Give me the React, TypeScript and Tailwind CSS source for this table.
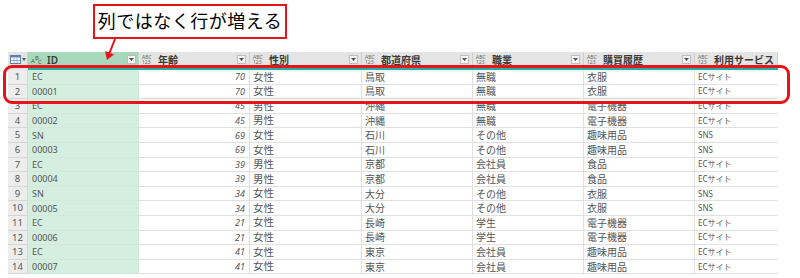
import React from "react";

type Row = [string, number, string, string, string, string, string];

const rows: Row[] = [
  ["EC", 70, "女性", "鳥取", "無職", "衣服", "ECサイト"],
  ["00001", 70, "女性", "鳥取", "無職", "衣服", "ECサイト"],
  ["EC", 45, "男性", "沖縄", "無職", "電子機器", "ECサイト"],
  ["00002", 45, "男性", "沖縄", "無職", "電子機器", "ECサイト"],
  ["SN", 69, "女性", "石川", "その他", "趣味用品", "SNS"],
  ["00003", 69, "女性", "石川", "その他", "趣味用品", "SNS"],
  ["EC", 39, "男性", "京都", "会社員", "食品", "ECサイト"],
  ["00004", 39, "男性", "京都", "会社員", "食品", "ECサイト"],
  ["SN", 34, "女性", "大分", "その他", "衣服", "SNS"],
  ["00005", 34, "女性", "大分", "その他", "衣服", "SNS"],
  ["EC", 21, "女性", "長崎", "学生", "電子機器", "ECサイト"],
  ["00006", 21, "女性", "長崎", "学生", "電子機器", "ECサイト"],
  ["EC", 41, "女性", "東京", "会社員", "趣味用品", "ECサイト"],
  ["00007", 41, "女性", "東京", "会社員", "趣味用品", "ECサイト"],
];

const headers = ["年齢", "性別", "都道府県", "職業", "購買履歴", "利用サービス"];

const font = "font-['Noto_Sans','Noto_Sans_CJK_JP',sans-serif]";

const TypeIcon = () => (
  <div className="flex w-[12px] shrink-0 flex-col text-[5px] leading-[5px] text-[#666]">
    <span>ABC</span>
    <span>123</span>
  </div>
);

const Dropdown = () => (
  <div className="flex h-[9px] w-[9px] shrink-0 items-center justify-center border border-[#bdbdbd] bg-[#f7f7f7]">
    <svg width="5" height="3" viewBox="0 0 5 3">
      <path d="M0 0h5L2.5 3z" fill="#555" />
    </svg>
  </div>
);

const HeaderCell = ({ label, w, last }: { label: string; w: string; last?: boolean }) => (
  <div className={`flex h-[15px] items-center gap-[4px] overflow-hidden border-r border-[#cfcfcf] bg-[#e4e4e4] pl-[3px] pr-[3px] ${w}`}>
    <TypeIcon />
    <span className="flex-1 whitespace-nowrap text-[10px] font-semibold leading-none text-[#3a3a3a]">{label}</span>
    {!last && <Dropdown />}
  </div>
);

const colW = ["w-[111px]", "w-[112px]", "w-[111px]", "w-[111px]", "w-[111px]", "w-[83px]"];

export default function App() {
  return (
    <div className={`relative h-[278px] w-[800px] overflow-hidden bg-white ${font}`}>
      <div className="h-[52px] pl-[93px] pt-[4px]">
        <div className="flex h-[35px] w-[194px] items-center justify-center border-2 border-[#e8141b] bg-white text-[18px] tracking-[0.5px] text-black">
          列ではなく行が増える
        </div>
      </div>

      <div className="ml-[8px] flex flex-col">
        <div className="flex">
          <div className="flex h-[15px] w-[20px] items-center justify-center gap-[1px] border-r border-[#cfcfcf] bg-[#e4e4e4]">
            <svg width="11" height="9" viewBox="0 0 11 9">
              <rect x="0.5" y="0.5" width="10" height="8" fill="#fff" stroke="#5b7fb0" />
              <rect x="0.5" y="0.5" width="10" height="2" fill="#5b7fb0" />
              <path d="M4 3v6M7 3v6M1 5.5h9" stroke="#5b7fb0" strokeWidth="0.6" />
            </svg>
            <svg width="4" height="3" viewBox="0 0 4 3">
              <path d="M0 0h4L2 3z" fill="#555" />
            </svg>
          </div>
          <div className="flex h-[15px] w-[111px] items-center gap-[4px] border-r border-[#b9d8c4] bg-[#a8d8b9] pl-[3px] pr-[2px]">
            <div className="relative h-[10px] w-[12px] text-[6px] leading-none text-[#555]">
              <span className="absolute left-0 top-[3px]">A</span>
              <span className="absolute left-[4px] top-0">B</span>
              <span className="absolute left-[7px] top-[4px]">C</span>
            </div>
            <span className="flex-1 text-[10px] font-semibold leading-none text-[#3a3a3a]">ID</span>
            <Dropdown />
          </div>
          {headers.map((h, i) => (
            <HeaderCell key={h} label={h} w={colW[i]} last={i === headers.length - 1} />
          ))}
        </div>
        <div className="flex h-[3px]">
          <div className="w-[20px] bg-[#e4e4e4]" />
          <div className="w-[750px] bg-[#20b2a3]" />
        </div>

        {rows.map((r, i) => (
          <div key={i} className="flex h-[14.6px] text-[#555]">
            <div className="flex w-[20px] items-center justify-center border-b border-r border-[#d6d6d6] bg-[#ededed] text-[9.5px] leading-none text-[#555]">
              {i + 1}
            </div>
            <div className="flex w-[111px] items-center border-b border-r border-[#d2e9da] bg-[#d4eee0] pl-[4px] text-[9px] leading-none">
              {r[0]}
            </div>
            <div className="flex w-[111px] items-center justify-end border-b border-r border-[#e0e0e0] pr-[4px] text-[9px] italic leading-none">
              {r[1]}
            </div>
            <div className="flex w-[112px] items-center border-b border-r border-[#e0e0e0] pl-[3px] text-[10.5px] leading-none">
              {r[2]}
            </div>
            <div className="flex w-[111px] items-center border-b border-r border-[#e0e0e0] pl-[3px] text-[10px] leading-none">
              {r[3]}
            </div>
            <div className="flex w-[111px] items-center border-b border-r border-[#e0e0e0] pl-[3px] text-[10px] leading-none">
              {r[4]}
            </div>
            <div className="flex w-[111px] items-center border-b border-r border-[#e0e0e0] pl-[3px] text-[10px] leading-none">
              {r[5]}
            </div>
            <div className="flex w-[83px] items-center border-b border-[#e0e0e0] pl-[3px] text-[8px] leading-none">
              {r[6]}
            </div>
          </div>
        ))}
      </div>

      <svg className="absolute left-[100px] top-[38px]" width="20" height="24" viewBox="0 0 20 24">
        <path d="M15 1L9.5 15" stroke="#e8141b" strokeWidth="2" fill="none" />
        <path d="M5 13l2 9 7-5.5z" fill="#e8141b" />
      </svg>

      <div className="absolute left-[3px] top-[65px] h-[39px] w-[787px] rounded-[9px] border-[3px] border-[#e8141b]" />
    </div>
  );
}
